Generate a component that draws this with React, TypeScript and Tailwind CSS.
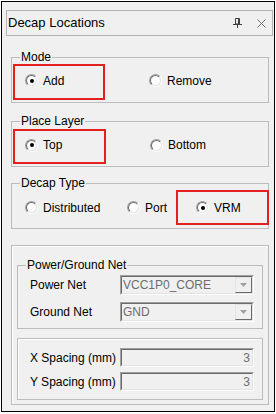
import React from "react";

function Radio({ label, checked = false }: { label: string; checked?: boolean }) {
  return (
    <div className="flex items-center gap-[5px]">
      <span className="flex h-[13px] w-[13px] shrink-0 rounded-full border border-t-[#a0a0a0] border-l-[#a0a0a0] border-b-white border-r-white">
        <span className="flex flex-1 items-center justify-center rounded-full border border-t-[#696969] border-l-[#696969] border-b-[#e3e3e3] border-r-[#e3e3e3] bg-white">
          {checked ? <span className="h-[4px] w-[4px] rounded-full bg-black" /> : null}
        </span>
      </span>
      <span className="leading-[14px]">{label}</span>
    </div>
  );
}

function Sunken({ className, children }: { className: string; children: React.ReactNode }) {
  return (
    <div
      className={`flex border border-t-[#a0a0a0] border-l-[#a0a0a0] border-b-white border-r-white ${className}`}
    >
      <div className="flex flex-1 items-center border border-t-[#696969] border-l-[#696969] border-b-[#e3e3e3] border-r-[#e3e3e3] bg-[#f0f0f0]">
        {children}
      </div>
    </div>
  );
}

function ComboBox({ value }: { value: string }) {
  return (
    <Sunken className="h-[20px] w-[134px]">
      <span className="flex-1 pl-[1px] text-[#6d6d6d]">{value}</span>
      <span className="flex h-full w-[17px] items-center justify-center border border-t-[#e3e3e3] border-l-[#e3e3e3] border-b-[#696969] border-r-[#696969] bg-[#f0f0f0]">
        <svg width="7" height="4" viewBox="0 0 7 4">
          <path d="M0 0h7L3.5 4z" fill="#a0a0a0" />
        </svg>
      </span>
    </Sunken>
  );
}

function NumberBox({ value }: { value: string }) {
  return (
    <Sunken className="h-[19px] w-[134px]">
      <span className="flex-1 pr-[2px] text-right text-[#6d6d6d]">{value}</span>
    </Sunken>
  );
}

function Group({ title, className, children }: { title: string; className: string; children: React.ReactNode }) {
  return (
    <fieldset className={`border border-[#bcbcbc] ${className}`}>
      <legend className="ml-[8px] px-[1px] leading-[14px]">{title}</legend>
      {children}
    </fieldset>
  );
}

export default function App() {
  return (
    <div className="h-[414px] w-[276px] bg-white pl-px pt-px font-['Liberation_Sans',Arial,sans-serif] text-[12px] text-black">
      <div className="h-[411px] w-[274px] border border-black bg-[#f0f0f0]">
        <div className="ml-[4px] mt-[8px] flex h-[26px] w-[267px] items-center border border-[#b4b4b4] pl-[1px] pr-[6px]">
          <span className="text-[13px]">Decap Locations</span>
          <svg className="ml-auto" width="9" height="10" viewBox="0 0 9 10" fill="none" stroke="#404040">
            <path d="M2.5 0.5h4v5.5h-4z" />
            <path d="M5.5 1v5" />
            <path d="M0 6.5h9" />
            <path d="M4.5 7v3" />
          </svg>
          <svg className="ml-[15px]" width="9" height="9" viewBox="0 0 9 9" stroke="#707070">
            <path d="M0.5 0.5l8 8M8.5 0.5l-8 8" />
          </svg>
        </div>

        <Group title="Mode" className="ml-[9px] mt-[14px] h-[53px] w-[258px]">
          <div className="relative flex h-[33px] items-center pl-[13px]">
            <div className="w-[124px]">
              <Radio label="Add" checked />
            </div>
            <Radio label="Remove" />
            <div className="absolute left-[1px] top-0 h-[36px] w-[92px] border-2 border-[#e3201d]" />
          </div>
        </Group>

        <Group title="Place Layer" className="ml-[9px] mt-[11px] h-[53px] w-[258px]">
          <div className="relative flex h-[34px] items-center pl-[13px]">
            <div className="w-[125px]">
              <Radio label="Top" checked />
            </div>
            <Radio label="Bottom" />
            <div className="absolute left-[1px] top-[1px] h-[35px] w-[93px] border-2 border-[#e3201d]" />
          </div>
        </Group>

        <Group title="Decap Type" className="ml-[9px] mt-[9px] h-[53px] w-[258px]">
          <div className="relative flex h-[35px] items-center pl-[13px]">
            <div className="w-[102px]">
              <Radio label="Distributed" />
            </div>
            <div className="w-[69px]">
              <Radio label="Port" />
            </div>
            <Radio label="VRM" checked />
            <div className="absolute left-[164px] top-0 h-[35px] w-[93px] border-2 border-[#e3201d]" />
          </div>
        </Group>

        <div className="ml-[9px] mt-[16px] h-[160px] w-[258px] border border-[#bcbcbc] pt-[12px] shadow-[inset_1px_1px_0_#fff]">
          <Group title="Power/Ground Net" className="ml-[5px] h-[71px] w-[246px]">
            <div className="flex flex-col gap-[7px] pl-[12px] pt-[3px]">
              <div className="flex items-center">
                <span className="w-[90px]">Power Net</span>
                <ComboBox value="VCC1P0_CORE" />
              </div>
              <div className="flex items-center">
                <span className="w-[90px]">Ground Net</span>
                <ComboBox value="GND" />
              </div>
            </div>
          </Group>

          <div className="ml-[5px] mt-[9px] flex h-[62px] w-[246px] flex-col gap-[5px] border border-[#bcbcbc] pl-[12px] pt-[9px] shadow-[inset_1px_1px_0_#fff]">
            <div className="flex items-center">
              <span className="w-[90px]">X Spacing (mm)</span>
              <NumberBox value="3" />
            </div>
            <div className="flex items-center">
              <span className="w-[90px]">Y Spacing (mm)</span>
              <NumberBox value="3" />
            </div>
          </div>
        </div>
      </div>
    </div>
  );
}
